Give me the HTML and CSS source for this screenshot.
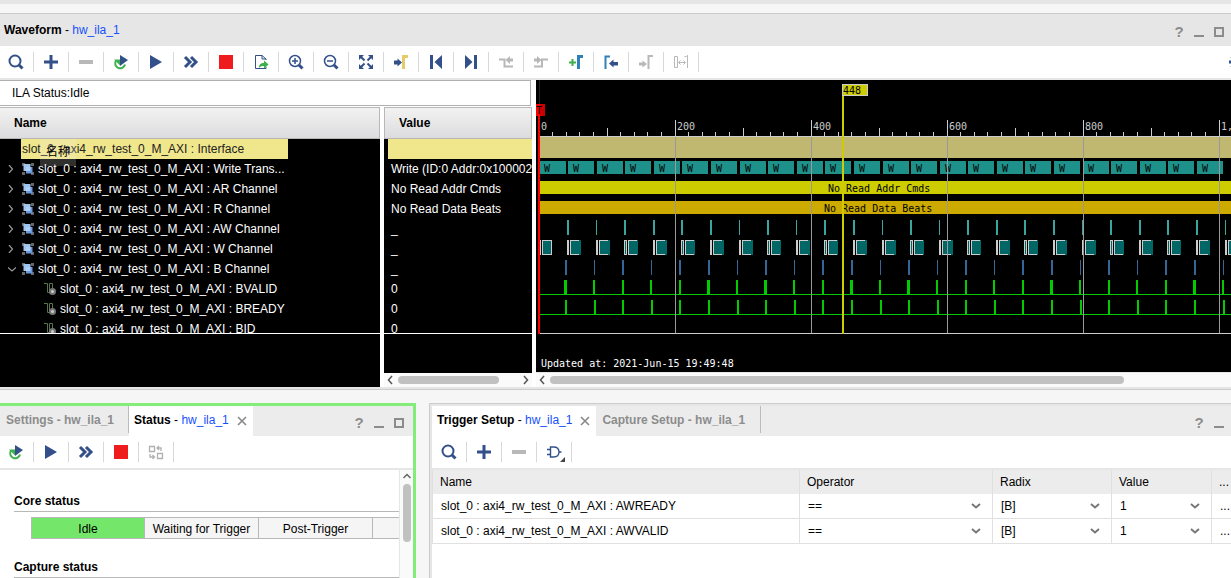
FILE: index.html
```html
<!DOCTYPE html>
<html lang="en">
<head>
<meta charset="utf-8">
<title>Waveform - hw_ila_1</title>
<link rel="stylesheet" href="styles.css">
</head>
<body>
<svg class="symbols" aria-hidden="true">
  <symbol id="i-search" viewBox="0 0 16 16"><circle cx="7" cy="7" r="5.500" fill="none" stroke="#33508a" stroke-width="2"/><path d="M11 11l3.500 3.500" stroke="#33508a" stroke-width="3"/></symbol>
  <symbol id="i-plus" viewBox="0 0 16 16"><path d="M8 1v14M1 8h14" stroke="#33508a" stroke-width="3"/></symbol>
  <symbol id="i-minus" viewBox="0 0 16 16"><path d="M1 8h14" stroke="#b8b8b8" stroke-width="4"/></symbol>
  <symbol id="i-rerun" viewBox="0 0 16 16"><path d="M3 6.500a5 5 0 1 0 9 4" fill="none" stroke="#3cb04a" stroke-width="2"/><path d="M1 5.500h6v6z" fill="#3cb04a"/><path d="M7 1l8 5-8 6z" fill="#33508a"/></symbol>
  <symbol id="i-play" viewBox="0 0 16 16"><path d="M2 1l12 7-12 7z" fill="#33508a"/></symbol>
  <symbol id="i-fast" viewBox="0 0 16 16"><path d="M2 3l5 5-5 5M8 3l5 5-5 5" fill="none" stroke="#33508a" stroke-width="3"/></symbol>
  <symbol id="i-stop" viewBox="0 0 16 16"><path d="M1 1h14v14H1z" fill="#ee1c1c"/></symbol>
  <symbol id="i-export" viewBox="0 0 16 16"><path d="M13 6V5L9 1.500H2.500v13H13V13M9 1.500V5h4" fill="none" stroke="#33508a" stroke-width="1"/><path d="M6 14c0-4 2-5 5-5V6.500l4.500 4-4.500 4V12c-2 0-3 0-5 2z" fill="#3cb04a"/></symbol>
  <symbol id="i-zoomin" viewBox="0 0 16 16"><circle cx="7" cy="7" r="5.500" fill="none" stroke="#33508a" stroke-width="1.500"/><path d="M11 11l3.500 3.500" stroke="#33508a" stroke-width="3"/><path d="M7 4v6M4 7h6" stroke="#33508a" stroke-width="1.500"/></symbol>
  <symbol id="i-zoomout" viewBox="0 0 16 16"><circle cx="7" cy="7" r="5.500" fill="none" stroke="#33508a" stroke-width="1.500"/><path d="M11 11l3.500 3.500" stroke="#33508a" stroke-width="3"/><path d="M4 7h6" stroke="#33508a" stroke-width="1.500"/></symbol>
  <symbol id="i-fit" viewBox="0 0 16 16"><path d="M1 1h5L1 6zM15 1v5l-5-5zM1 15v-5l5 5zM15 15h-5l5-5z" fill="#33508a"/><path d="M2 2l4.500 4.500M14 2L9.500 6.500M2 14l4.500-4.500M14 14l-4.500-4.500" stroke="#33508a" stroke-width="2"/></symbol>
  <symbol id="i-gotrig" viewBox="0 0 16 16"><path d="M1 6.500h3.500V4.500L9 8.500l-4.500 4v-2H1z" fill="#33508a"/><path d="M10.500 15V2.500H15" fill="none" stroke="#e6cb6a" stroke-width="3"/></symbol>
  <symbol id="i-first" viewBox="0 0 16 16"><path d="M2 1h3v14H2zM14 1v14L6.500 8z" fill="#33508a"/></symbol>
  <symbol id="i-last" viewBox="0 0 16 16"><path d="M11 1h3v14h-3zM2 1v14l7.500-7z" fill="#33508a"/></symbol>
  <symbol id="i-prevedge" viewBox="0 0 16 16"><path d="M1 5.500h5.500v7H15" fill="none" stroke="#b8b8b8" stroke-width="2"/><path d="M15 4.500v3h-3v2.500L7.500 6 12 2v2.500z" fill="#b8b8b8"/></symbol>
  <symbol id="i-nextedge" viewBox="0 0 16 16"><path d="M1 12.500h8v-7h6" fill="none" stroke="#b8b8b8" stroke-width="2"/><path d="M1 4.500v3h3v2.500L8.500 6 4 2v2.500z" fill="#b8b8b8"/></symbol>
  <symbol id="i-addmark" viewBox="0 0 16 16"><path d="M1 8.500h7M4.500 5v7" stroke="#3cb04a" stroke-width="2"/><path d="M10.500 15V2.500H15" fill="none" stroke="#2f80b8" stroke-width="3"/></symbol>
  <symbol id="i-premark" viewBox="0 0 16 16"><path d="M2.500 15V2.500H7" fill="none" stroke="#2f80b8" stroke-width="2"/><path d="M15 8H10.500V5.500L6 9.500l4.500 4v-2H15z" fill="#33508a"/></symbol>
  <symbol id="i-nextmark" viewBox="0 0 16 16"><path d="M1 8.500h3.500v-2L9 10l-4.500 3.500v-2H1z" fill="#b8b8b8"/><path d="M10.500 15V2H15" fill="none" stroke="#b8b8b8" stroke-width="2"/></symbol>
  <symbol id="i-swap" viewBox="0 0 16 16"><path d="M1.500 2.500h3v11h-3zM14.500 1v13M11.500 2.500h2" fill="none" stroke="#b8b8b8"/><path d="M6 8.500h6M7.500 6.500l-2 2 2 2M10.500 6.500l2 2-2 2" fill="none" stroke="#b8b8b8"/></symbol>
  <symbol id="i-dash" viewBox="0 0 16 16"><path d="M1.500 2.500h5v5h-5zM9.500 9.500h5v5h-5z" fill="none" stroke="#b0b0b0" stroke-width="1.300"/><path d="M9 4h4v3M11 2L9 4l2 2M2 10v3h4M4.500 11l2 2-2 2" fill="none" stroke="#b0b0b0" stroke-width="1.300"/></symbol>
  <symbol id="i-gate" viewBox="0 0 20 20"><path d="M5.500 5h3c3.500 0 5.500 2 5.500 5s-2 5-5.500 5h-3zM2 7.500h3.500M2 12.500h3.500M14 10h2.500" fill="none" stroke="#33508a" stroke-width="1.400"/><path d="M20 15v5h-5z" fill="#444"/></symbol>
  <symbol id="i-gear" viewBox="0 0 16 16"><circle cx="8" cy="8" r="4" fill="none" stroke="#33508a" stroke-width="3"/><path d="M0 8h3M13 8h3M8 0v3M8 13v3M2.500 2.500l2 2M11.500 11.500l2 2M2.500 13.500l2-2M11.500 4.500l2-2" stroke="#33508a" stroke-width="3"/></symbol>
  <symbol id="i-bus" viewBox="0 0 12 12"><path d="M0 0h3v3H0zM9 0h3v3H9zM0 9h3v3H0zM9 9h3v3H9z" fill="#666"/><path d="M1.500 1h7v7h-7z" fill="#9fc4ee"/><path d="M4 4h6.500v6.500H4z" fill="#6a9ae0"/><path d="M4 4h4.500v4H4z" fill="#b0cff5"/></symbol>
  <symbol id="i-net" viewBox="0 0 12 12"><path d="M0 .5h3.500v9h2M5.500 9.500v-9h3v6" fill="none" stroke="#55774a"/><circle cx="8.500" cy="8.500" r="3.500" fill="#777"/><circle cx="8.500" cy="8.500" r="1.500" fill="#ccc"/></symbol>
  <symbol id="i-min" viewBox="0 0 10 10"><path d="M0 8h10v2H0z" fill="#8c8c8c"/></symbol>
  <symbol id="i-max" viewBox="0 0 10 10"><path d="M1 1h8v8H1z" fill="none" stroke="#8c8c8c" stroke-width="2"/></symbol>
  <symbol id="i-close" viewBox="0 0 10 10"><path d="M1 1l8 8M9 1L1 9" stroke="#888" stroke-width="1.600"/></symbol>
  <symbol id="i-down" viewBox="0 0 10 6"><path d="M1 1l4 3.500L9 1" fill="none" stroke="#777" stroke-width="2"/></symbol>
  <symbol id="i-up" viewBox="0 0 10 6"><path d="M1.500 5L5 1.500 8.500 5" fill="none" stroke="#666" stroke-width="1.500"/></symbol>
  <symbol id="i-left" viewBox="0 0 6 10"><path d="M5 1L1.500 5 5 9" fill="none" stroke="#555" stroke-width="1.500"/></symbol>
  <symbol id="i-right" viewBox="0 0 6 10"><path d="M1 1l3.500 4L1 9" fill="none" stroke="#555" stroke-width="1.500"/></symbol>
  <symbol id="i-closed" viewBox="0 0 8 8"><path d="M1 0l3.500 4L1 8" fill="none" stroke="#999" stroke-width="1.200"/></symbol>
  <symbol id="i-open" viewBox="0 0 8 8"><path d="M0 2.500L4 6l4-3.500" fill="none" stroke="#999" stroke-width="1.200"/></symbol>
</svg>

<section class="waveform">
  <header class="title-bar">
    <h1 class="title">Waveform <span class="sep">-</span> <span class="link-name">hw_ila_1</span></h1>
    <div class="window-controls">
      <button class="help" aria-label="Help">?</button>
      <button aria-label="Minimize"><svg class="ctl"><use href="#i-min"/></svg></button>
      <button aria-label="Maximize"><svg class="ctl"><use href="#i-max"/></svg></button>
    </div>
  </header>
  <div class="toolbar flush">
    <button aria-label="Find"><svg><use href="#i-search"/></svg></button>
    <button aria-label="Add"><svg><use href="#i-plus"/></svg></button>
    <button aria-label="Remove"><svg><use href="#i-minus"/></svg></button>
    <button aria-label="Auto re-trigger"><svg><use href="#i-rerun"/></svg></button>
    <button aria-label="Run trigger"><svg><use href="#i-play"/></svg></button>
    <button aria-label="Run trigger immediate"><svg><use href="#i-fast"/></svg></button>
    <button aria-label="Stop trigger"><svg><use href="#i-stop"/></svg></button>
    <button aria-label="Export data"><svg><use href="#i-export"/></svg></button>
    <button aria-label="Zoom in"><svg><use href="#i-zoomin"/></svg></button>
    <button aria-label="Zoom out"><svg><use href="#i-zoomout"/></svg></button>
    <button aria-label="Zoom fit"><svg><use href="#i-fit"/></svg></button>
    <button aria-label="Go to trigger"><svg><use href="#i-gotrig"/></svg></button>
    <button aria-label="Go to start"><svg><use href="#i-first"/></svg></button>
    <button aria-label="Go to end"><svg><use href="#i-last"/></svg></button>
    <button aria-label="Previous transition"><svg><use href="#i-prevedge"/></svg></button>
    <button aria-label="Next transition"><svg><use href="#i-nextedge"/></svg></button>
    <button aria-label="Add marker"><svg><use href="#i-addmark"/></svg></button>
    <button aria-label="Previous marker"><svg><use href="#i-premark"/></svg></button>
    <button aria-label="Next marker"><svg><use href="#i-nextmark"/></svg></button>
    <button aria-label="Swap cursors"><svg><use href="#i-swap"/></svg></button>
    <button class="settings" aria-label="Settings"><svg><use href="#i-gear"/></svg></button>
  </div>
  <div class="wave-body">
    <div class="signals">
      <div class="ila-status">ILA Status:Idle</div>
      <div class="signal-cols">
        <div class="pane">
          <div class="col-head">Name</div>
          <ul class="rows">
            <li class="selected"><span>slot_0 : axi4_rw_test_0_M_AXI : Interface</span></li>
            <li><svg class="twist"><use href="#i-closed"/></svg><svg class="sig"><use href="#i-bus"/></svg>slot_0 : axi4_rw_test_0_M_AXI : Write Trans...</li>
            <li><svg class="twist"><use href="#i-closed"/></svg><svg class="sig"><use href="#i-bus"/></svg>slot_0 : axi4_rw_test_0_M_AXI : AR Channel</li>
            <li><svg class="twist"><use href="#i-closed"/></svg><svg class="sig"><use href="#i-bus"/></svg>slot_0 : axi4_rw_test_0_M_AXI : R Channel</li>
            <li><svg class="twist"><use href="#i-closed"/></svg><svg class="sig"><use href="#i-bus"/></svg>slot_0 : axi4_rw_test_0_M_AXI : AW Channel</li>
            <li><svg class="twist"><use href="#i-closed"/></svg><svg class="sig"><use href="#i-bus"/></svg>slot_0 : axi4_rw_test_0_M_AXI : W Channel</li>
            <li><svg class="twist"><use href="#i-open"/></svg><svg class="sig"><use href="#i-bus"/></svg>slot_0 : axi4_rw_test_0_M_AXI : B Channel</li>
            <li class="leaf"><svg class="sig"><use href="#i-net"/></svg>slot_0 : axi4_rw_test_0_M_AXI : BVALID</li>
            <li class="leaf"><svg class="sig"><use href="#i-net"/></svg>slot_0 : axi4_rw_test_0_M_AXI : BREADY</li>
            <li class="leaf"><svg class="sig"><use href="#i-net"/></svg>slot_0 : axi4_rw_test_0_M_AXI : BID</li>
          </ul>
          <div class="filler"></div>
          <div class="tooltip" lang="zh">名称</div>
        </div>
        <div class="pane">
          <div class="col-head value-head">Value</div>
          <ul class="rows values">
            <li class="selected-value"></li>
            <li>Write (ID:0 Addr:0x100002</li>
            <li>No Read Addr Cmds</li>
            <li>No Read Data Beats</li>
            <li>_</li>
            <li>_</li>
            <li>_</li>
            <li>0</li>
            <li>0</li>
            <li>0</li>
          </ul>
          <div class="filler"></div>
          <div class="hscroll"><svg class="arrow"><use href="#i-left"/></svg><span class="track"><span class="thumb value-thumb"></span></span><svg class="arrow"><use href="#i-right"/></svg></div>
        </div>
      </div>
    </div>
    <div class="wave-pane">
      <svg class="wave" id="wave" role="img" aria-label="Captured waveform"></svg>
      <div class="hscroll wave-scroll"><svg class="arrow"><use href="#i-left"/></svg><span class="track"><span class="thumb wave-thumb"></span></span></div>
    </div>
  </div>
</section>

<div class="lower">
  <section class="panel active">
    <header class="tabs">
      <button class="tab idle-tab">Settings - hw_ila_1</button>
      <button class="tab current">Status <span class="sep">- </span><span class="link-name">hw_ila_1</span><svg class="ctl close"><use href="#i-close"/></svg></button>
      <div class="window-controls">
        <button class="help" aria-label="Help">?</button>
        <button aria-label="Minimize"><svg class="ctl"><use href="#i-min"/></svg></button>
        <button aria-label="Maximize"><svg class="ctl"><use href="#i-max"/></svg></button>
      </div>
    </header>
    <div class="toolbar flush">
      <button aria-label="Auto re-trigger"><svg><use href="#i-rerun"/></svg></button>
      <button aria-label="Run trigger"><svg><use href="#i-play"/></svg></button>
      <button aria-label="Run trigger immediate"><svg><use href="#i-fast"/></svg></button>
      <button aria-label="Stop trigger"><svg><use href="#i-stop"/></svg></button>
      <button aria-label="Dashboard options"><svg><use href="#i-dash"/></svg></button>
    </div>
    <div class="status-area">
      <div class="status-body">
        <h2>Core status</h2>
        <div class="steps"><span class="step on">Idle</span><span class="step">Waiting for Trigger</span><span class="step">Post-Trigger</span><span class="step"></span></div>
        <h2>Capture status</h2>
      </div>
      <div class="vscroll"><svg class="up"><use href="#i-up"/></svg><span class="vthumb"></span></div>
    </div>
  </section>

  <section class="panel trigger">
    <header class="tabs">
      <button class="tab current">Trigger Setup <span class="sep">- </span><span class="link-name">hw_ila_1</span><svg class="ctl close"><use href="#i-close"/></svg></button>
      <button class="tab idle-tab">Capture Setup - hw_ila_1</button>
      <div class="window-controls">
        <button class="help" aria-label="Help">?</button>
        <button aria-label="Minimize"><svg class="ctl"><use href="#i-min"/></svg></button>
      </div>
    </header>
    <div class="toolbar">
      <button aria-label="Find"><svg><use href="#i-search"/></svg></button>
      <button aria-label="Add probe"><svg><use href="#i-plus"/></svg></button>
      <button aria-label="Remove probe"><svg><use href="#i-minus"/></svg></button>
      <button aria-label="Trigger condition"><svg class="gate"><use href="#i-gate"/></svg></button>
    </div>
    <table class="probes">
      <colgroup><col><col class="c-op"><col class="c-radix"><col class="c-value"><col class="c-more"></colgroup>
      <thead><tr><th>Name</th><th>Operator</th><th>Radix</th><th>Value</th><th>...</th></tr></thead>
      <tbody>
        <tr>
          <td>slot_0 : axi4_rw_test_0_M_AXI : AWREADY</td>
          <td><span class="pick"><select aria-label="AWREADY operator"><option>==</option></select><svg><use href="#i-down"/></svg></span></td>
          <td><span class="pick"><select aria-label="AWREADY radix"><option>[B]</option></select><svg><use href="#i-down"/></svg></span></td>
          <td><span class="pick"><select aria-label="AWREADY value"><option>1</option></select><svg><use href="#i-down"/></svg></span></td>
          <td>...</td>
        </tr>
        <tr>
          <td>slot_0 : axi4_rw_test_0_M_AXI : AWVALID</td>
          <td><span class="pick"><select aria-label="AWVALID operator"><option>==</option></select><svg><use href="#i-down"/></svg></span></td>
          <td><span class="pick"><select aria-label="AWVALID radix"><option>[B]</option></select><svg><use href="#i-down"/></svg></span></td>
          <td><span class="pick"><select aria-label="AWVALID value"><option>1</option></select><svg><use href="#i-down"/></svg></span></td>
          <td>...</td>
        </tr>
      </tbody>
    </table>
  </section>
</div>
<script src="wave.js"></script>
</body>
</html>
```
FILE: styles.css
```css
* { box-sizing: border-box; }

body {
  margin: 0;
  height: 100vh;
  display: flex;
  flex-direction: column;
  overflow: hidden;
  background: #f6f6f6;
  border-top: 4px solid #e6e6e6;
  color: #000;
  font: 12px/20px "Liberation Sans", Arial, "Noto Sans CJK SC", sans-serif;
}

button {
  padding: 0;
  border: 0;
  background: none;
  color: inherit;
  font: inherit;
  display: flex;
  align-items: center;
  justify-content: center;
}

svg { display: block; flex: none; }
.symbols { position: absolute; width: 0; height: 0; }
.link-name { color: #1450ff; font-weight: normal; }
.sep { font-weight: normal; }

/* window chrome */
.waveform {
  margin-top: 9px;
  border-top: 1px solid #ccc;
  border-bottom: 1px solid #ccc;
  background: #e6e6e6;
  padding-bottom: 2px;
}
.title-bar { display: flex; align-items: center; height: 32px; padding: 0 7px 0 4px; }
.title { margin: 0; font-size: 12px; line-height: 20px; }
.window-controls { display: flex; align-items: center; gap: 10px; margin-left: auto; padding-top: 4px; }
.help { width: 10px; color: #8c8c8c; font-size: 15px; font-weight: bold; line-height: 16px; }
.ctl { width: 10px; height: 10px; }

.toolbar {
  display: flex;
  align-items: center;
  height: 34px;
  background: #fff;
  border-bottom: 2px solid #e6e6e6;
}
.toolbar button { flex: none; width: 35px; height: 20px; border-right: 1px solid #d8d8d8; }
.toolbar.flush button:first-child { width: 34px; padding-right: 1px; }
.toolbar svg { width: 16px; height: 16px; }
.toolbar .gate { width: 20px; height: 20px; margin-left: 2px; }
.toolbar .settings { width: 2px; margin-left: auto; border: 0; overflow: hidden; justify-content: flex-start; }

/* waveform area */
.wave-body { display: grid; grid-template-columns: minmax(0, 532fr) minmax(0, 695fr); gap: 4px; background: #fff; }
.ila-status { height: 26px; margin-right: 1px; padding-left: 12px; border: 1px solid #b0b0b0; border-left: 0; line-height: 24px; }
.signal-cols { display: grid; grid-template-columns: minmax(0, 380fr) minmax(0, 148fr); gap: 4px; margin-top: 1px; }
.pane { position: relative; display: flex; flex-direction: column; min-width: 0; background: #000; }
.col-head {
  height: 32px;
  padding-left: 14px;
  border: 1px solid #b8b8b8;
  border-left: 0;
  background: linear-gradient(#f2f2f2, #dcdcde);
  font-weight: bold;
  line-height: 30px;
}
.value-head { border-left: 1px solid #b8b8b8; }
.rows { margin: 0; padding: 0; height: 195px; overflow: hidden; border-bottom: 1px solid #fff; list-style: none; color: #fff; }
.rows li { display: flex; align-items: center; height: 20px; padding-left: 8px; white-space: nowrap; }
.rows .selected { padding-left: 21px; color: #222; }
.selected span { flex: 0 1 267px; padding-left: 1px; background: #f0e68c; }
.rows .leaf { padding-left: 44px; }
.twist { width: 8px; height: 8px; margin-right: 6px; }
.sig { width: 12px; height: 12px; margin-right: 4px; }
.rows.values li { padding-left: 7px; }
.rows .selected-value { margin-left: 4px; background: #f0e68c; }
.filler { flex: 1; min-height: 39px; }
.tooltip {
  position: absolute;
  left: 40px;
  top: 32px;
  width: 36px;
  height: 27px;
  background: rgba(240, 240, 230, 0.2);
  color: #000;
  line-height: 27px;
  text-align: center;
}

.hscroll { display: flex; align-items: center; height: 14px; padding: 0 3px; gap: 5px; background: #fafafa; }
.arrow { width: 6px; height: 10px; }
.track { flex: 1; }
.thumb { display: block; height: 8px; border-radius: 4px; background: #c1c1c1; }
.value-thumb { width: 84%; }
.wave-thumb { width: 84.6%; }
.wave-scroll { height: 15px; border-top: 1px solid #e6e6e6; }
.wave-pane { display: flex; flex-direction: column; min-width: 0; }
.wave { width: 100%; height: 292px; background: #000; font: 10px "DejaVu Sans Mono", monospace; }

/* lower panels */
.lower { flex: 1; min-height: 0; display: grid; grid-template-columns: minmax(0, 416fr) minmax(0, 802fr); gap: 13px; margin-top: 13px; }
.panel { display: flex; flex-direction: column; min-height: 0; background: #fff; }
.active { border: solid #84ec78; border-width: 3px 3px 0 0; }
.trigger {
  border-top: 1px solid #ccc;
  border-left: 1px solid #ccc;
  background: linear-gradient(90deg, #e6e6e6 2px, #fff 2px);
}
.trigger > * { margin-left: 2px; }
.tabs { display: flex; flex: none; height: 30px; padding-right: 7px; background: #ececec; }
.active .tabs { padding-right: 9px; }
.trigger .tabs { border-top: 2px solid #e6e6e6; height: 32px; }
.tab { font-weight: bold; white-space: pre; }
.current { padding: 0 6px 3px 5px; background: #fff; }
.close { margin: 3px 0 0 8px; }
.idle-tab { height: 27px; padding: 0 15px 0 6px; border-right: 1px solid #bbb; color: #8c8c8c; }
.active .idle-tab { padding-right: 14px; }
.panel .toolbar { flex: none; }

.status-area { flex: 1; display: flex; min-height: 0; }
.status-body { flex: 1; min-width: 0; overflow: hidden; padding: 22px 0 0 14px; }
.status-body h2 { margin: 0; border-bottom: 1px solid #b8b8b8; font-size: 12px; line-height: 19px; }
.steps { display: flex; margin: 5px 0 19px 17px; border: 1px solid #b8b8b8; border-right: 0; }
.step { flex: none; width: 114px; height: 20px; border-right: 1px solid #b8b8b8; background: #f5f5f5; line-height: 23px; text-align: center; white-space: nowrap; }
.step.on { width: 113px; background: #74e66a; }
.vscroll { width: 14px; flex: none; border-left: 1px solid #e6e6e6; background: #fafafa; display: flex; flex-direction: column; align-items: center; padding-top: 3px; gap: 5px; }
.up { width: 10px; height: 6px; }
.vthumb { width: 8px; height: 58px; border-radius: 4px; background: #c1c1c1; }

.probes { table-layout: fixed; border-collapse: separate; border-spacing: 0; border-left: 1px solid #e0e0e0; line-height: 24px; }
.c-op { width: 193px; }
.c-radix { width: 119px; }
.c-value { width: 100px; }
.c-more { width: 19px; }
.probes th, .probes td { height: 25px; padding: 0 0 0 8px; border-right: 1px solid #e0e0e0; text-align: left; white-space: nowrap; overflow: hidden; }
.probes th { height: 24px; padding-left: 7px; background: #ececec; font-weight: normal; }
.probes td { border-bottom: 1px solid #e0e0e0; }
.probes th:last-child, .probes td:last-child { border-right: 0; }
.pick { display: grid; align-items: center; }
.pick select { grid-area: 1 / 1; width: 100%; height: 24px; margin: 0; padding: 0; border: 0; background: none; appearance: none; color: inherit; font: inherit; }
.pick svg { grid-area: 1 / 1; justify-self: end; width: 10px; height: 6px; margin-right: 11px; pointer-events: none; }
```
FILE: wave.js
```js
const parts = [];
const box = (x, y, w, h, fill) => parts.push(`<rect x="${x}" y="${y}" width="${w}" height="${h}" fill="${fill}"/>`);
const label = (x, y, s, fill) => parts.push(`<text x="${x}" y="${y}" fill="${fill}">${s}</text>`);

// ruler
box(4, 56, '100%', 1, '#ccc');
for (let k = 1; k <= 50; k++) {
  const h = k % 10 === 0 ? 16 : k % 5 === 0 ? 8 : 4;
  box(Math.floor(3 + 13.6 * k), 56 - h, 1, h, '#ccc');
}
['0', '200', '400', '600', '800', '1,'].forEach((s, i) => label(5 + 136 * i, 50, s, '#ccc'));

// interface and transaction bands
box(4, 57, '100%', 21, '#c0b870');
box(4, 101, '100%', 13, '#cccc00');
box(4, 121, '100%', 13, '#ccaa00');
label(292, 112, 'No Read Addr Cmds', '#000');
label(288, 132, 'No Read Data Beats', '#000');

// idle level of BVALID and BREADY
box(4, 214, '100%', 1, '#00cc00');
box(4, 234, '100%', 1, '#00cc00');

for (let k = 0; k <= 24; k++) {
  const pos = 2.95 + 28.59 * k;
  const x = Math.floor(pos);
  const part = pos - x;
  if (k < 24) {
    box(k === 0 ? 4 : x + 1, 81, 26, 13, '#1e918a');
    label(x + 6, 92, 'W', '#000');
  }
  if (k === 0) {
    box(4, 160, 1, 15, '#ccc');
    box(6, 160, 10, 15, '#ccc');
    box(7, 161, 8, 13, '#006666');
    continue;
  }
  box(x, 140, part < 0.28 ? 1 : 2, 15, '#3aa59e');
  const wide = part > 0.6;
  box(x, 160, wide ? 3 : 2, 15, '#ccc');
  if (wide) box(x + 1, 161, 1, 13, '#006666');
  const start = x + (wide ? 4 : 3);
  box(start, 160, 9, 15, '#ccc');
  box(start + 1, 161, 8, 13, '#006666');
  box(start + 9, 160, wide ? 1 : 2, 15, '#006666');
  box(x - 2, 180, part < 0.41 ? 1 : 2, 15, '#336699');
  box(part > 0.7 ? x - 2 : x - 3, 200, part > 0.4 && part < 0.7 ? 3 : 2, 14, '#00cc00');
  box(x - 2, 220, 2, 14, '#00cc00');
}

for (let i = 1; i <= 5; i++) box(3 + 136 * i, 57, 1, 196, '#999');
box(4, 253, '100%', 1, '#ccc');

// trigger position
box(3, 0, 1, 24, '#222');
box(0, 24, 9, 12, '#cc0000');
box(0, 24, 4, 12, '#ff0000');
box(2, 36, 2, 218, '#ff0000');
label(0, 34, 'T', '#000');

// cursor
box(306, 4, 26, 12, '#ccc');
box(307, 5, 24, 10, '#cccc00');
box(306, 16, 2, 238, '#cccc00');
label(307, 14, '448', '#000');

label(5, 287, 'Updated at: 2021-Jun-15 19:49:48', '#fff');
document.getElementById('wave').innerHTML = parts.join('');
```
